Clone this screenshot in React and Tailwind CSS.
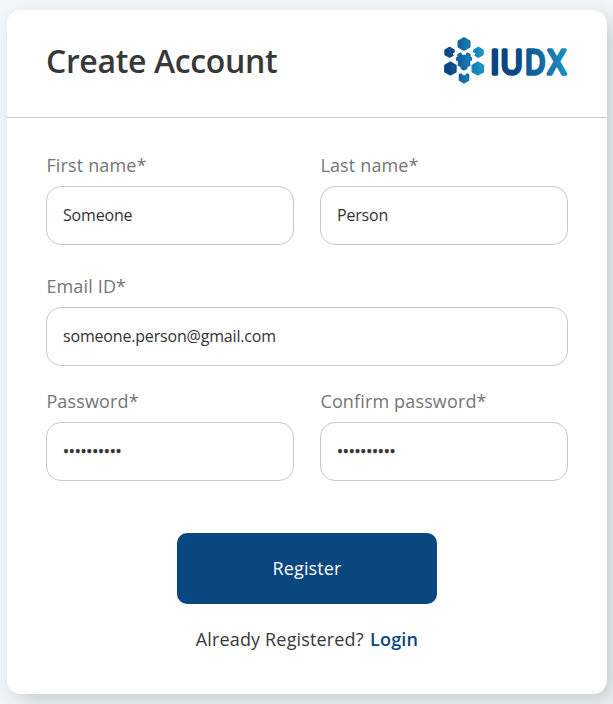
function Logo() {
  return (
    <svg width="126" height="50" viewBox="0 0 126 50" role="img" aria-label="IUDX">
      <defs>
        <linearGradient id="dark">
          <stop offset="0" stopColor="#0a3f7c" />
          <stop offset="1" stopColor="#145796" />
        </linearGradient>
        <linearGradient id="mid">
          <stop offset="0" stopColor="#0e5797" />
          <stop offset="1" stopColor="#1a84bd" />
        </linearGradient>
        <linearGradient id="light">
          <stop offset="0" stopColor="#1778b2" />
          <stop offset="1" stopColor="#2099cc" />
        </linearGradient>
        <linearGradient id="word" gradientUnits="userSpaceOnUse" x1="48" y1="25" x2="125" y2="25">
          <stop offset="0.3" stopColor="#0b4580" />
          <stop offset="1" stopColor="#1b8fc3" />
        </linearGradient>
      </defs>
      <g strokeWidth="1.4" strokeLinejoin="round">
        <g fill="url(#dark)" stroke="#0e4a88">
          <path d="M7.6 12.4L12.1 15V17L10.2 17.6V20L11 20.4L7.6 22.2L3 19.6V15Z" />
          <path d="M8.4 27.2L14 30.4V36.8L8.4 40L2.8 36.8V30.4Z" />
        </g>
        <g fill="url(#mid)" stroke="#146ca7">
          <path d="M22 2.8L27.8 6V12L22 15.2L16.2 12V6Z" />
          <path d="M16 19.6L18.6 18.2L20.2 20.8H23.8L25.4 18.2L28 19.6V22.4L29.4 23V25L27.6 25.6V30.4L24.8 31.6V33.4L22 34.8L19.2 33.4V31.6L16.4 30.4V25.6L14.6 25V23L16 22.4Z" />
          <path d="M17.4 39.6L19.2 39L20.6 41H23.4L24.8 39L26.6 39.6V45.2L22 47.8L17.4 45.2Z" />
        </g>
        <g fill="url(#light)" stroke="#1c8bc1">
          <path d="M36.4 12.4L31.9 15V17L33.8 17.6V20L33 20.4L36.4 22.2L41 19.6V15Z" />
          <path d="M35.8 27.2L41.4 30.4V36.8L35.8 40L30.2 36.8V30.4Z" />
        </g>
      </g>
      <g fill="url(#word)" stroke="url(#word)" strokeWidth="3.6" strokeLinejoin="round" className="font-['Open_Sans',sans-serif] text-[33px] font-normal">
        <text x="48.2" y="38.9">I</text>
        <text x="58.6" y="38.9" textLength="22.4" lengthAdjust="spacingAndGlyphs">U</text>
        <text x="83" y="38.9" textLength="20.3" lengthAdjust="spacingAndGlyphs">D</text>
        <text x="106.1" y="38.9" textLength="17.6" lengthAdjust="spacingAndGlyphs">X</text>
      </g>
    </svg>
  );
}

function Field({ label, value, type = "text" }) {
  return (
    <label className="block min-w-0 flex-1">
      <span className="block h-[32px] pl-[0.4px] text-[18px] leading-[22px] tracking-[0.15px] text-[#757575]">{label}</span>
      <input
        type={type}
        defaultValue={value}
        className={`block h-[59px] w-full rounded-[15px] border border-[#c8c8c8] bg-white px-4 pb-[1px] text-[16px] tracking-[-0.18px] text-[#333] outline-none ${
          type === "password" ? "[-webkit-text-stroke:0.5px_#333]" : ""
        }`}
      />
    </label>
  );
}

export default function App() {
  return (
    <main className="h-[704px] w-[613px] overflow-hidden bg-[#f1f6fa] pt-[10px] pl-[7px] font-['Open_Sans',sans-serif] text-[#383838]">
      <section className="h-[684px] w-[600px] rounded-[14px] bg-white shadow-[8px_8px_20px_#1b2c3030]">
        <header className="flex h-[108px] justify-between border-b border-[#c8c8c8] pr-[39px] pl-[39px]">
          <h1 className="pt-[30px] text-[32px] leading-[42px] font-semibold tracking-[-0.36px]">Create Account</h1>
          <div className="pt-[25px]"><Logo /></div>
        </header>
        <form className="px-[39px] pt-[36px]">
          <div className="flex gap-[26px]">
            <Field label="First name*" value="Someone" />
            <Field label="Last name*" value="Person" />
          </div>
          <div className="mt-[30px] flex">
            <Field label="Email ID*" value="someone.person@gmail.com" />
          </div>
          <div className="mt-[24px] flex gap-[26px]">
            <Field label="Password*" value="abcdefghij" type="password" />
            <Field label="Confirm password*" value="abcdefghij" type="password" />
          </div>
          <button type="button" className="mx-auto mt-[52px] block h-[71px] w-[260px] rounded-[10px] bg-[#0a467f] text-[18px] tracking-[0.1px] text-white">
            Register
          </button>
          <p className="mt-[22px] text-center text-[18px] leading-[26px] tracking-[0.15px]">
            Already Registered? <a className="ml-[1.5px] font-semibold tracking-[0.2px] text-[#0a467f]">Login</a>
          </p>
        </form>
      </section>
    </main>
  );
}
